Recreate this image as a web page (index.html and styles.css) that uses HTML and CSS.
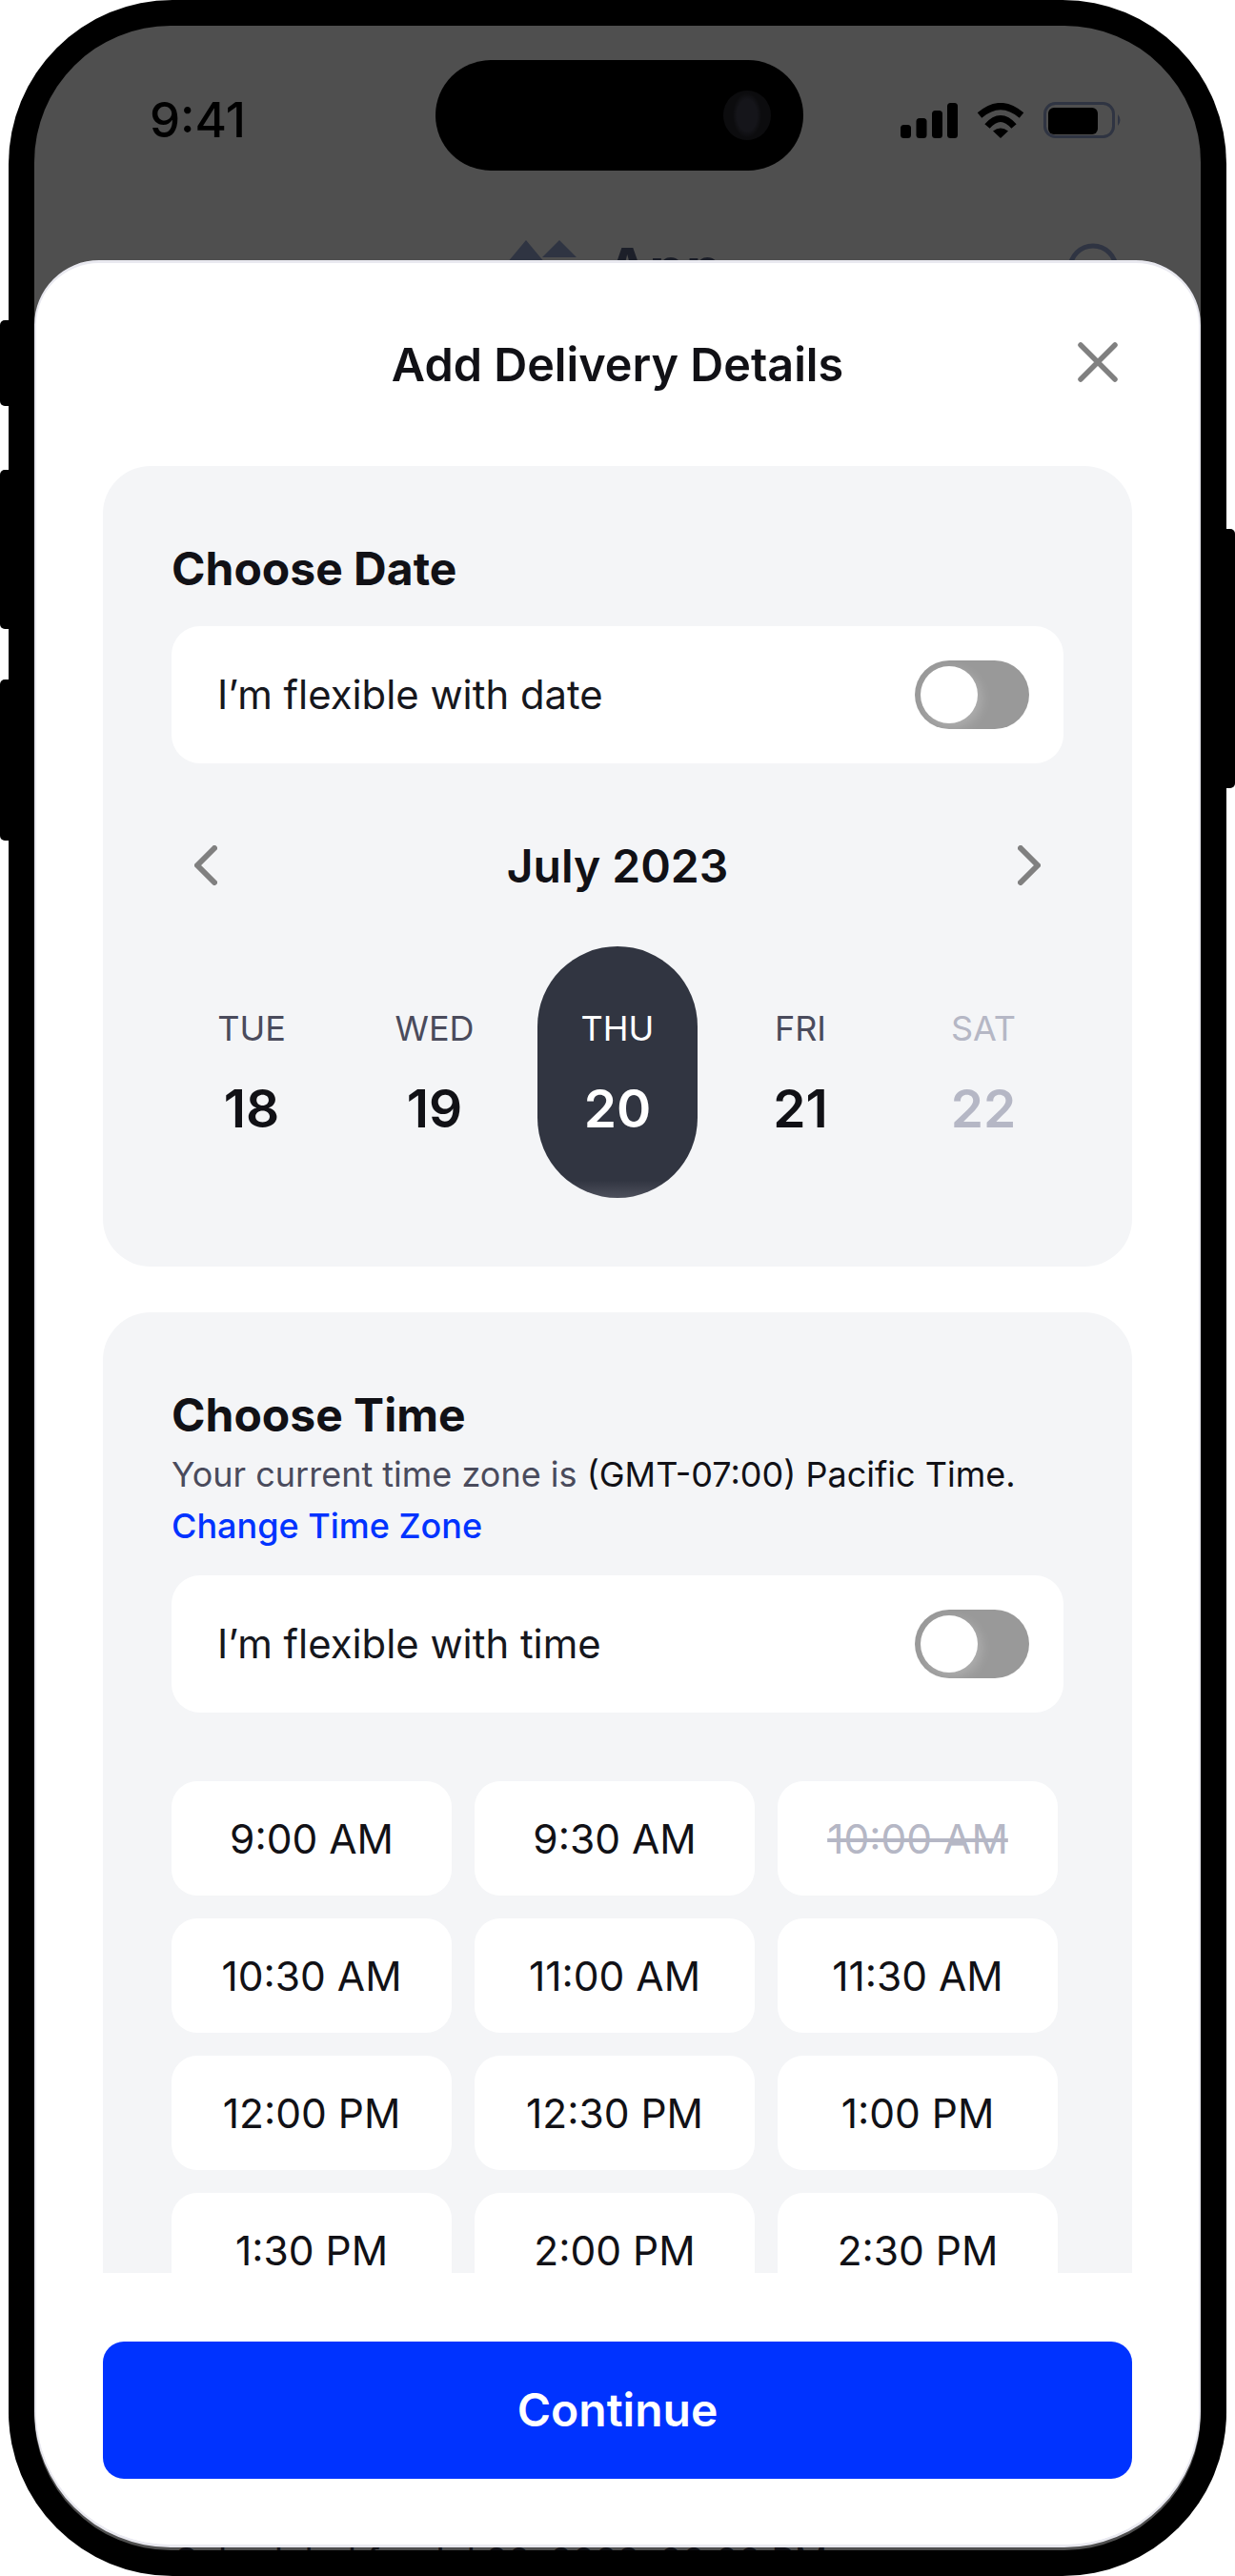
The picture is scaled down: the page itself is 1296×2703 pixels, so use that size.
FILE: index.html
```html
<!DOCTYPE html>
<html lang="en">
<head>
<meta charset="utf-8">
<title>Add Delivery Details</title>
<link rel="stylesheet" href="styles.css">
</head>
<body>
<div class="phone">
  <span class="side-btn side-a"></span>
  <span class="side-btn side-b"></span>
  <span class="side-btn side-c"></span>
  <span class="side-btn side-d"></span>
  <div class="screen">
    <div class="status">
      <span class="clock">9:41</span>
      <div class="status-icons">
        <svg class="ic-signal" viewBox="0 0 60 37"><rect x="0" y="23" width="11" height="14" rx="3.5"/><rect x="16.500" y="16" width="11" height="21" rx="3.5"/><rect x="33" y="8" width="11" height="29" rx="3.5"/><rect x="49" y="0" width="11" height="37" rx="3.5"/></svg>
        <svg class="ic-wifi" viewBox="0 0 50 37"><path class="wifi-arc" d="M3 13Q25-6 47 13"/><path class="wifi-arc" d="M11 24.500Q25 8.500 39 24.500"/><path d="M25 37L17 29.500Q25 23.500 33 29.500Z"/></svg>
        <svg class="ic-battery" viewBox="0 0 83 38"><rect class="batt-shell" x="1.500" y="1.500" width="72" height="35" rx="11"/><rect x="5" y="6" width="52" height="28" rx="6"/><path class="batt-tip" d="M78 13Q83 19 78 25Z"/></svg>
      </div>
    </div>
    <div class="notch"><span class="camera"></span></div>
    <div class="appbar">
      <div class="brand">
        <svg class="ic-logo" viewBox="0 0 73 24"><path d="M0 24L20 0L40 24Z"/><path d="M37 18L55 0L73 18Z"/></svg>
        <span class="brand-name">App</span>
      </div>
      <svg class="ic-search" viewBox="0 0 54 54"><circle cx="27" cy="27" r="24"/></svg>
    </div>
    <div class="behind-line">Scheduled for Jul 20, 2023, 00:00 PM</div>

    <div class="sheet">
      <header class="sheet-head">
        <span></span>
        <h1 class="sheet-title">Add Delivery Details</h1>
        <svg class="ic-close" viewBox="0 0 42 42"><path d="M3 3L39 39M39 3L3 39"/></svg>
      </header>

      <div class="sheet-body">
        <section class="card card-date">
          <h2 class="card-title">Choose Date</h2>
          <div class="flex-row">
            <span>I’m flexible with date</span>
            <span class="toggle"><span class="knob"></span></span>
          </div>
          <div class="month">
            <svg class="ic-chev" viewBox="0 0 24 42"><path d="M21 3L3 21L21 39"/></svg>
            <span class="month-name">July 2023</span>
            <svg class="ic-chev" viewBox="0 0 24 42"><path d="M3 3L21 21L3 39"/></svg>
          </div>
          <div class="days">
            <div class="day"><span class="dow">TUE</span><span class="num">18</span></div>
            <div class="day"><span class="dow">WED</span><span class="num">19</span></div>
            <div class="day is-selected"><span class="dow">THU</span><span class="num">20</span></div>
            <div class="day"><span class="dow">FRI</span><span class="num">21</span></div>
            <div class="day is-off"><span class="dow">SAT</span><span class="num">22</span></div>
          </div>
        </section>

        <section class="card card-time">
          <h2 class="card-title">Choose Time</h2>
          <p class="zone">Your current time zone is <span class="zone-value">(GMT-07:00) Pacific Time.</span><br><a class="zone-link" href="#">Change Time Zone</a></p>
          <div class="flex-row">
            <span>I’m flexible with time</span>
            <span class="toggle"><span class="knob"></span></span>
          </div>
          <div class="slots">
            <div class="slot">9:00 AM</div>
            <div class="slot">9:30 AM</div>
            <div class="slot is-taken">10:00 AM</div>
            <div class="slot">10:30 AM</div>
            <div class="slot">11:00 AM</div>
            <div class="slot">11:30 AM</div>
            <div class="slot">12:00 PM</div>
            <div class="slot">12:30 PM</div>
            <div class="slot">1:00 PM</div>
            <div class="slot">1:30 PM</div>
            <div class="slot">2:00 PM</div>
            <div class="slot">2:30 PM</div>
          </div>
        </section>
      </div>

      <footer class="sheet-foot">
        <button class="cta" type="button">Continue</button>
      </footer>
    </div>
  </div>
</div>
</body>
</html>
```

FILE: styles.css
```css
* { box-sizing: border-box; }

html, body {
  margin: 0;
  height: 2703px;
  overflow: hidden;
  background: #fff;
  font-family: "Inter", "Liberation Sans", sans-serif;
  color: #111116;
}

.phone {
  position: relative;
  width: 1278px;
  height: 2703px;
  margin-left: 9px;
  padding: 27px;
  background: #000;
  border-radius: 172px;
}

.side-btn {
  position: absolute;
  width: 14px;
  background: #000;
  border-radius: 5px;
}
.side-a { left: -9px; top: 336px; height: 90px; }
.side-b { left: -9px; top: 493px; height: 167px; }
.side-c { left: -9px; top: 713px; height: 169px; }
.side-d { right: -9px; top: 555px; height: 272px; }

.screen {
  position: relative;
  height: 100%;
  overflow: hidden;
  background: #4f4f4f;
  border-radius: 143px;
}

.status {
  display: flex;
  align-items: center;
  justify-content: space-between;
  height: 198px;
  padding: 0 82px 0 121px;
}
.clock {
  font-size: 51px;
  font-weight: 500;
  line-height: 60px;
  color: #000;
}
.status-icons {
  display: flex;
  align-items: center;
  gap: 19px;
}
.ic-signal { width: 60px; height: 37px; fill: #000; display: block; }
.ic-wifi { width: 52px; height: 37px; fill: #000; display: block; }
.wifi-arc { fill: none; stroke: #000; stroke-width: 7; }
.ic-battery { width: 83px; height: 38px; fill: #000; display: block; }
.batt-shell { fill: none; stroke: #2f3442; stroke-width: 3; }
.batt-tip { fill: #2f3442; }

.notch {
  position: absolute;
  left: 421px;
  top: 36px;
  width: 386px;
  height: 116px;
  display: flex;
  align-items: center;
  justify-content: flex-end;
  padding-right: 34px;
  background: #000;
  border-radius: 58px;
}
.camera {
  width: 50px;
  height: 52px;
  border-radius: 50%;
  background: radial-gradient(ellipse 30% 45%, #15151a 0 70%, #0c0c0e 100%);
}

.appbar {
  display: grid;
  grid-template-columns: 1fr auto 1fr;
  align-items: start;
  padding: 27px 86px 0;
}
.brand {
  grid-column: 2;
  display: flex;
  align-items: flex-start;
  gap: 31px;
  margin-right: 6px;
}
.ic-logo { width: 73px; height: 24px; fill: #2f3442; display: block; }
.brand-name {
  margin-top: 2px;
  font-size: 61px;
  font-weight: 700;
  line-height: 56px;
  color: #1c1f29;
}
.ic-search {
  grid-column: 3;
  justify-self: end;
  width: 54px;
  height: 54px;
  margin-top: 3px;
  fill: none;
  stroke: #2f3442;
  stroke-width: 5;
}

.behind-line {
  position: absolute;
  left: 147px;
  top: 2637px;
  font-size: 38px;
  line-height: 46px;
  color: #111116;
}

.sheet {
  position: absolute;
  left: 0;
  right: 0;
  top: 246px;
  bottom: 3px;
  display: flex;
  flex-direction: column;
  background: #fff;
  border: 3px solid #e9e9f0;
  border-width: 3px 2px;
  border-radius: 68px 68px 143px 143px;
}

.sheet-head {
  display: grid;
  grid-template-columns: 1fr auto 1fr;
  align-items: center;
  height: 213px;
  padding: 0 85px;
  flex: none;
}
.sheet-title {
  margin: 0;
  font-size: 48.500px;
  font-weight: 600;
  line-height: 56px;
  color: #111116;
}
.ic-close {
  justify-self: end;
  width: 42px;
  height: 42px;
  margin-top: -6px;
  fill: none;
  stroke: #808080;
  stroke-width: 5.500;
  stroke-linecap: round;
}

.sheet-body {
  flex: 1;
  min-height: 0;
  overflow: hidden;
  padding: 0 70px;
}

.card {
  padding: 78px 72px 72px;
  background: #f4f5f7;
  border-radius: 50px;
}
.card + .card { margin-top: 48px; }
.card-title {
  margin: 0;
  font-size: 48px;
  font-weight: 700;
  line-height: 60px;
  color: #111116;
}
.card-date .card-title { margin-bottom: 30px; }

.zone {
  margin: 5px 0 25px;
  font-size: 36px;
  line-height: 54px;
  color: #4a4b5c;
}
.zone-value { color: #111116; }
.zone-link { color: #0033ff; font-weight: 500; text-decoration: none; }

.flex-row {
  display: flex;
  align-items: center;
  justify-content: space-between;
  height: 144px;
  padding: 0 36px 0 48px;
  background: #fff;
  border-radius: 30px;
  font-size: 41.800px;
  color: #16171d;
}
.toggle {
  display: flex;
  align-items: center;
  width: 120px;
  height: 72px;
  padding: 0 6px;
  background: #999;
  border-radius: 36px;
}
.knob {
  width: 60px;
  height: 60px;
  background: #fff;
  border-radius: 50%;
  box-shadow: 4px 4px 12px rgba(255, 255, 255, .22);
}

.month {
  display: flex;
  align-items: center;
  justify-content: space-between;
  height: 72px;
  margin-top: 71px;
  padding: 0 24px;
}
.ic-chev {
  width: 24px;
  height: 42px;
  fill: none;
  stroke: #808080;
  stroke-width: 6;
  stroke-linecap: round;
  stroke-linejoin: round;
}
.month-name {
  padding-top: 2px;
  font-size: 48px;
  font-weight: 600;
  line-height: 60px;
  color: #111116;
}

.days {
  display: grid;
  grid-template-columns: repeat(5, 168px);
  gap: 24px;
  margin-top: 49px;
}
.day {
  display: flex;
  flex-direction: column;
  align-items: center;
  height: 264px;
  padding-top: 64px;
  border-radius: 84px;
}
.dow {
  font-size: 36px;
  line-height: 44px;
  color: #4a4b5c;
}
.num {
  margin-top: 30px;
  font-size: 55px;
  font-weight: 600;
  line-height: 64px;
  color: #111116;
}
.is-selected { background: linear-gradient(#313541 93%, #4d505c 100%); }
.is-selected .dow, .is-selected .num { color: #fff; }
.is-off .dow, .is-off .num { color: #b5b7c5; }

.slots {
  display: grid;
  grid-template-columns: repeat(3, 294px);
  gap: 24px;
  margin-top: 72px;
}
.slot {
  display: flex;
  align-items: center;
  justify-content: center;
  height: 120px;
  background: #fff;
  border-radius: 27px;
  font-size: 42.500px;
  color: #111116;
}
.is-taken {
  color: #b5b7c5;
  text-decoration: line-through;
}

.sheet-foot {
  flex: none;
  padding: 72px 70px 69px;
  background: #fff;
  border-radius: 0 0 141px 141px;
}
.cta {
  display: block;
  width: 100%;
  height: 144px;
  border: 0;
  border-radius: 22px;
  background: #0033ff;
  color: #fff;
  font: 600 48px/60px "Inter", "Liberation Sans", sans-serif;
}
```
